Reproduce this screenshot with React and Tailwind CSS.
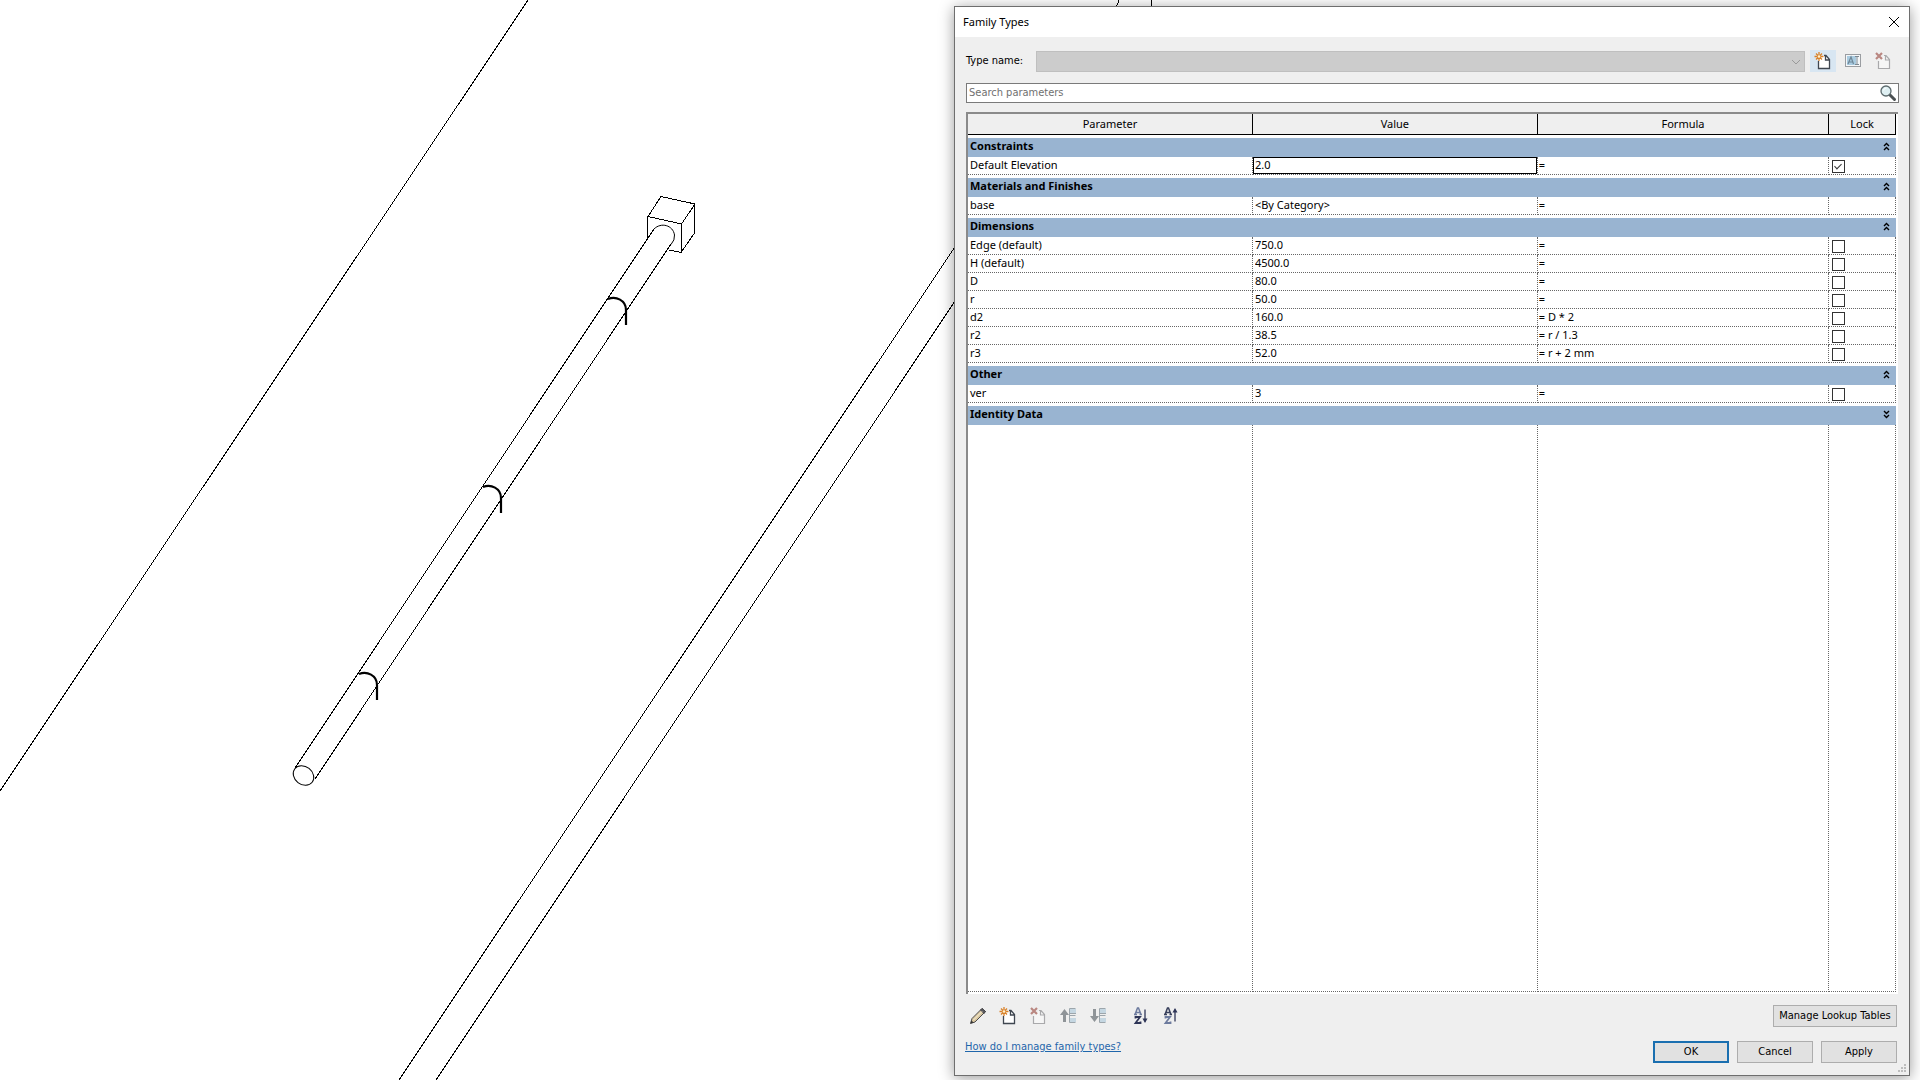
import React, { useState } from "react";

const GROUPS = [
  {
    name: "Constraints",
    rows: [{ name: "Default Elevation", value: "2.0", formula: "=", lock: true, active: true }],
  },
  {
    name: "Materials and Finishes",
    rows: [{ name: "base", value: "<By Category>", formula: "=", lock: null }],
  },
  {
    name: "Dimensions",
    rows: [
      { name: "Edge (default)", value: "750.0", formula: "=", lock: false },
      { name: "H (default)", value: "4500.0", formula: "=", lock: false },
      { name: "D", value: "80.0", formula: "=", lock: false },
      { name: "r", value: "50.0", formula: "=", lock: false },
      { name: "d2", value: "160.0", formula: "= D * 2", lock: false },
      { name: "r2", value: "38.5", formula: "= r / 1.3", lock: false },
      { name: "r3", value: "52.0", formula: "= r + 2 mm", lock: false },
    ],
  },
  {
    name: "Other",
    rows: [{ name: "ver", value: "3", formula: "=", lock: false }],
  },
  { name: "Identity Data", rows: [], collapsed: true },
];

/* ---------- icons ---------- */

const NewIcon = () => (
  <svg width="18" height="18" viewBox="0 0 18 18" fill="none">
    <path d="M4.5 8v8.5h11V7.5l-3.5-4H9" fill="#fff" />
    <path d="M4.5 9v7.5h11V7.5l-3.5-4H10M11.5 4v4h4" stroke="#3f4650" strokeWidth="1.3" />
    <path d="M5 0v9M.5 4.5h9M2 1.5l6 6M8 1.5l-6 6" stroke="#d9822b" strokeWidth="1.3" />
    <circle cx="5" cy="4.5" r="1.3" fill="#fff3d0" />
  </svg>
);

const DeleteIcon = () => (
  <svg width="18" height="18" viewBox="0 0 18 18" fill="none">
    <path d="M4.5 9v7.5h11V7.5l-3.5-4H10M11.5 4v4h4" fill="#f6f6f6" stroke="#a9a9ab" strokeWidth="1.2" />
    <path d="M2 1l6 6M8 1L2 7" stroke="#b98781" strokeWidth="2.2" />
  </svg>
);

const RenameIcon = () => (
  <svg width="18" height="18" viewBox="0 0 18 18" fill="none">
    <rect x="1.5" y="2.5" width="15" height="12" fill="#f4f6f8" stroke="#9a9da1" />
    <rect x="3" y="4" width="9" height="9" fill="#a9cbe0" />
    <path d="M4 12l3-7 2.5 7M5 10h4" stroke="#6f8797" strokeWidth="1.2" />
    <path d="M11 4.5h4M13 4.5v8M11 12.5h4" stroke="#7c8790" />
  </svg>
);

const SearchIcon = () => (
  <svg width="18" height="18" viewBox="0 0 18 18" fill="none">
    <path d="M10.5 10.5l5 5" stroke="#4b5052" strokeWidth="3" strokeLinecap="round" />
    <circle cx="7" cy="7" r="5" fill="#dff0f3" stroke="#5d6b6e" strokeWidth="1.3" />
    <path d="M4.5 6.5a3 3 0 0 1 3-2.5" stroke="#fff" />
  </svg>
);

const PencilIcon = () => (
  <svg width="18" height="18" viewBox="0 0 18 18" fill="none">
    <path d="M1.5 16.5l1.5-5L13 1.5l3.5 3L6 15z" fill="#d9c7a0" stroke="#4c4c4e" />
    <path d="M11.5 3l3.5 3.5 1.5-2-3.5-3z" fill="#5a5a60" stroke="#45454a" />
    <path d="M4.5 13L13 4.5" stroke="#f7efda" />
    <path d="M1.5 16.5l1-3 2 2z" fill="#333" />
  </svg>
);

const MoveIcon = ({ down }) => (
  <svg width="18" height="18" viewBox="0 0 18 18" fill="none">
    {down ? (
      <path d="M4 2h3v7h3l-4.500 6L1 9h3z" fill="#8f9498" />
    ) : (
      <path d="M5.500 2L10 8H7v7H4V8H1z" fill="#8f9498" />
    )}
    <path d="M11 2h6v4h-6zM11 11h6v4h-6z" fill="#c5d7e2" />
    <path d="M16.500 1.500h-6v14h6M10.500 8.500h6M11 6.500h6" stroke="#9da6ac" />
  </svg>
);

const SortIcon = ({ up }) => (
  <svg width="18" height="18" viewBox="0 0 18 18" fill="none">
    <path
      d="M2 7.500L4.500 1h1L8 7.500M3 5.500h4M1 7.500h3M6.500 7.500H9"
      stroke={up ? "#38405c" : "#6d7b9e"}
      strokeWidth="1.5"
    />
    <path
      d="M2.500 11.500V10h4.500L2.500 16h5v-1.500"
      stroke={up ? "#6d7b9e" : "#2e3557"}
      strokeWidth="1.800"
    />
    <path d="M12 2.500v12" stroke="#2e3557" strokeWidth="1.300" />
    {up ? (
      <path d="M12 1l2.500 4.500h-5z" fill="#2e3557" />
    ) : (
      <path d="M12 16l2.500-4.500h-5z" fill="#2e3557" />
    )}
  </svg>
);

const Chevrons = ({ down }) => (
  <svg width="7" height="9" viewBox="0 0 7 9" fill="none" className={down ? "mt-1 rotate-180" : "mt-1"}>
    <path d="M1 4l2.500-2.500L6 4M1 8l2.500-2.500L6 8" stroke="#000" strokeWidth="1.400" />
  </svg>
);

/* ---------- 3D view behind the dialog ---------- */

const ring = (x, y) => `M${x} ${y + 1}C${x + 8} ${y - 2} ${x + 18} ${y + 2} ${x + 18} ${y + 12}V${y + 27}`;

const ModelView = () => (
  <svg className="absolute inset-0 h-full w-full" fill="none" stroke="#000">
    <g shapeRendering="crispEdges">
      <path d="M0 791L528 0M399 1080L1115 7Q1119 3 1119 0M436 1080L1151 7M1151.500 0V7" />
      <path d="M661 196.500L695 204L681.500 224L648 216.500ZM647.500 216V239M681.500 224V252M694.500 204V233L681 252.500L669 250" />
      <path d="M295 768L654 229M315 779L671 244" />
    </g>
    <path d="M654 229C661 222 673 225 674.500 235Q675 240 671 244.500" />
    <ellipse cx="303.500" cy="775.500" rx="11" ry="9" transform="rotate(38 303.500 775.500)" />
    <path d={`${ring(608, 298)}${ring(483, 486)}${ring(359, 673)}`} strokeWidth="2.200" />
  </svg>
);

/* ---------- dialog ---------- */

const iconButton = "flex h-[22px] w-[26px] items-center justify-center";
const pushButton =
  "h-[22px] w-[76px] border border-[#adadad] bg-[#e1e1e1] text-center hover:border-[#0078d7] hover:bg-[#e5f1fb]";
const cell = "h-[18px] border-r border-b border-dotted border-[#666] p-0 align-top";

const ParameterTable = () => {
  const [groups, setGroups] = useState(GROUPS);

  const toggle = (name) =>
    setGroups(groups.map((g) => (g.name === name ? { ...g, collapsed: !g.collapsed } : g)));

  return (
    <table className="h-full w-full table-fixed border-separate border-spacing-0 font-['Noto_Sans',sans-serif]">
      <colgroup>
        <col className="w-[30.7%]" />
        <col className="w-[30.7%]" />
        <col className="w-[31.4%]" />
        <col />
      </colgroup>
      <thead>
        <tr className="h-[21px] bg-[#efefef]">
          {["Parameter", "Value", "Formula", "Lock"].map((h) => (
            <th key={h} className="h-[21px] border-r border-b border-black p-0 font-normal">
              {h}
            </th>
          ))}
        </tr>
      </thead>
      <tbody>
        {groups.map((g) => (
          <React.Fragment key={g.name}>
            <tr className="h-[22px]">
              <th colSpan={4} className="h-[22px] p-0 pt-[3px] text-left">
                <button
                  onClick={() => toggle(g.name)}
                  aria-expanded={!g.collapsed}
                  className="flex h-[19px] w-full items-start justify-between bg-[#99b4d1] pr-1.5 pl-0.5 font-bold"
                >
                  {g.name}
                  <Chevrons down={g.collapsed} />
                </button>
              </th>
            </tr>
            {!g.collapsed &&
              g.rows.map((r) => (
                <tr key={r.name} className="h-[18px] leading-[15px]">
                  <td className={`${cell} pl-0.5`}>{r.name}</td>
                  <td className={cell}>
                    <input
                      aria-label={r.name}
                      defaultValue={r.value}
                      className={
                        r.active
                          ? "block h-[17px] w-full border border-black px-px pb-0.5 outline-none"
                          : "block h-[17px] w-full px-0.5 pb-0.5 outline-none"
                      }
                    />
                  </td>
                  <td className={`${cell} pl-px`}>{r.formula}</td>
                  <td className={cell}>
                    {r.lock !== null && (
                      <input
                        type="checkbox"
                        aria-label={`Lock ${r.name}`}
                        defaultChecked={r.lock}
                        className="mt-[3px] ml-[3px] block size-[13px] appearance-none border border-[#333] bg-white checked:before:mt-px checked:before:ml-[3px] checked:before:block checked:before:h-[7px] checked:before:w-1 checked:before:rotate-45 checked:before:border-r checked:before:border-b checked:before:border-[#333]"
                      />
                    )}
                  </td>
                </tr>
              ))}
          </React.Fragment>
        ))}
        {/* empty area takes the rest of the height */}
        <tr className="h-full">
          <td className={cell}></td>
          <td className={cell}></td>
          <td className={cell}></td>
          <td className={cell}></td>
        </tr>
      </tbody>
    </table>
  );
};

const FamilyTypesDialog = () => (
  <section
    role="dialog"
    aria-labelledby="dialog-title"
    className="relative mr-0.5 flex w-1/2 flex-col border border-[#6e6e6e] bg-[#efefef] shadow-[0_2px_14px_rgba(0,0,0,0.4)]"
  >
    <header className="flex h-[30px] items-center justify-between bg-white pr-[7px] pl-2">
      <h1 id="dialog-title" className="font-['Noto_Sans',sans-serif]">
        Family Types
      </h1>
      <button aria-label="Close" className="flex size-4 items-center justify-center">
        <svg width="12" height="12" viewBox="0 0 12 12" stroke="#000">
          <path d="M1 1l10 10M11 1L1 11" />
        </svg>
      </button>
    </header>

    <div className="flex items-center pt-[13px] pr-[13px] pl-[11px]">
      <label htmlFor="type-name" className="w-[70px]">
        Type name:
      </label>
      <div className="relative flex-1">
        <select
          id="type-name"
          disabled
          className="block h-[21px] w-full appearance-none border border-[#bfbfbf] bg-[#cccccc]"
        />
        <svg className="absolute top-2 right-1" width="10" height="6" viewBox="0 0 10 6" fill="none" stroke="#9a9a9a">
          <path d="M1 1l4 4 4-4" />
        </svg>
      </div>
      <div className="ml-[5px] flex gap-1">
        <button aria-label="New type" className={`${iconButton} bg-[#d8e6f2]`}>
          <NewIcon />
        </button>
        <button aria-label="Rename type" className={iconButton}>
          <RenameIcon />
        </button>
        <button aria-label="Delete type" className={iconButton}>
          <DeleteIcon />
        </button>
      </div>
    </div>

    <div className="mt-[11px] mr-2.5 ml-[11px] flex h-5 items-center border border-[#7a7a7a] bg-white pr-px">
      <input
        type="search"
        aria-label="Search parameters"
        placeholder="Search parameters"
        className="h-full flex-1 px-0.5 pb-0.5 outline-none placeholder:text-[#707070]"
      />
      <SearchIcon />
    </div>

    <div className="mt-[9px] mr-[11px] ml-[11px] min-h-0 flex-1 border-t-2 border-l-2 border-[#8a8a8a] bg-white pr-0.5 pb-0.5">
      <ParameterTable />
    </div>

    <footer className="flex justify-between pt-[11px] pr-3 pb-3 pl-2.5">
      <div className="flex flex-col justify-between">
        <div className="flex gap-1">
          <button aria-label="Edit parameter" className={iconButton}>
            <PencilIcon />
          </button>
          <button aria-label="New parameter" className={iconButton}>
            <NewIcon />
          </button>
          <button aria-label="Delete parameter" className={iconButton}>
            <DeleteIcon />
          </button>
          <button aria-label="Move up" className={iconButton}>
            <MoveIcon />
          </button>
          <button aria-label="Move down" className={iconButton}>
            <MoveIcon down />
          </button>
          <button aria-label="Sort ascending" className={`${iconButton} ml-3.5`}>
            <SortIcon />
          </button>
          <button aria-label="Sort descending" className={iconButton}>
            <SortIcon up />
          </button>
        </div>
        <a href="#help" className="pb-2 text-[#1f66ab] underline">
          How do I manage family types?
        </a>
      </div>
      <div className="flex flex-col items-end gap-3.5">
        <button className="h-[22px] w-[124px] border border-[#adadad] bg-[#e1e1e1]">Manage Lookup Tables</button>
        <div className="flex gap-2">
          <button className="h-[22px] w-[76px] border-2 border-[#1a6fb0] bg-[#e1e1e1] text-center">OK</button>
          <button className={pushButton}>Cancel</button>
          <button className={pushButton}>Apply</button>
        </div>
      </div>
    </footer>

    <svg className="absolute right-0.5 bottom-0.5" width="9" height="9" viewBox="0 0 9 9" fill="#bdbdbd">
      <path d="M6 0h2v2h-2zM6 3h2v2h-2zM3 3h2v2h-2zM6 6h2v2h-2zM3 6h2v2h-2zM0 6h2v2h-2z" />
    </svg>
  </section>
);

export default function App() {
  return (
    <main className="relative flex h-screen justify-end overflow-hidden bg-white pt-1.5 pr-2 pb-1 font-['DejaVu_Sans_Condensed','DejaVu_Sans',sans-serif] text-[11px] leading-4 text-black">
      <ModelView />
      <FamilyTypesDialog />
    </main>
  );
}
